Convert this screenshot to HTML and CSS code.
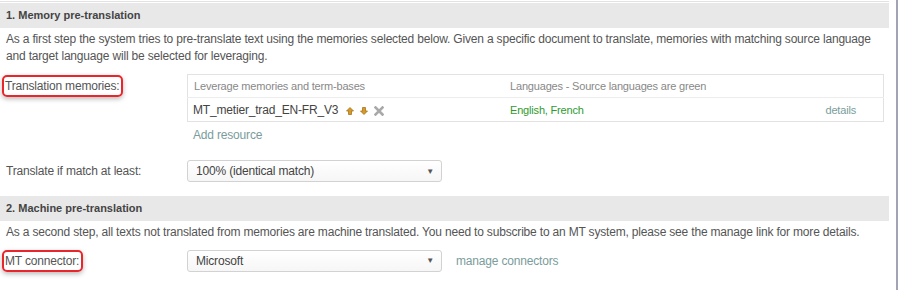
FILE: index.html
```html
<!DOCTYPE html>
<html>
<head>
<meta charset="utf-8">
<link rel="stylesheet" href="styles.css">
</head>
<body>
<div class="frame">
  <div class="page">
    <div class="section-head">1. Memory pre-translation</div>
    <p class="desc">As a first step the system tries to pre-translate text using the memories selected below. Given a specific document to translate, memories with matching source language and target language will be selected for leveraging.</p>

    <div class="field field-top">
      <div class="label"><span class="hl">Translation memories:</span></div>
      <div class="control">
        <table class="tm">
          <thead>
            <tr><th class="c1">Leverage memories and term-bases</th><th class="c2">Languages - Source languages are green</th><th class="c3"></th></tr>
          </thead>
          <tbody>
            <tr>
              <td class="c1"><span class="tm-name">MT_metier_trad_EN-FR_V3</span>
                <span class="icons">
                  <svg class="ico" width="8" height="8" viewBox="0 0 8 8"><path d="M4 0.5 L7.5 4 L5.5 4 L5.5 7.5 L2.5 7.5 L2.5 4 L0.5 4 Z" fill="#d29a28" stroke="#a87316" stroke-width="0.8"/></svg>
                  <svg class="ico" width="8" height="8" viewBox="0 0 8 8"><path d="M4 7.5 L7.5 4 L5.5 4 L5.5 0.5 L2.5 0.5 L2.5 4 L0.5 4 Z" fill="#d29a28" stroke="#a87316" stroke-width="0.8"/></svg>
                  <svg class="ico" width="10" height="10" viewBox="0 0 10 10"><path d="M1.5 1.5 L8.5 8.5 M8.5 1.5 L1.5 8.5" stroke="#a9a9a9" stroke-width="2.6" stroke-linecap="square"/></svg>
                </span>
              </td>
              <td class="c2 green">English, French</td>
              <td class="c3"><span class="link">details</span></td>
            </tr>
          </tbody>
        </table>
        <div class="add"><span class="link">Add resource</span></div>
      </div>
    </div>

    <div class="field field-match">
      <div class="label plain">Translate if match at least:</div>
      <div class="control row">
        <div class="select"><span>100% (identical match)</span><span class="arrow">&#9660;</span></div>
      </div>
    </div>

    <div class="section-head">2. Machine pre-translation</div>
    <p class="desc">As a second step, all texts not translated from memories are machine translated. You need to subscribe to an MT system, please see the manage link for more details.</p>

    <div class="field field-mt">
      <div class="label"><span class="hl">MT connector:</span></div>
      <div class="control row">
        <div class="select"><span>Microsoft</span><span class="arrow">&#9660;</span></div>
        <span class="link manage">manage connectors</span>
      </div>
    </div>
  </div>
</div>
</body>
</html>
```

FILE: styles.css
```css
html, body {
  margin: 0;
  padding: 0;
  background: #fff;
}
body {
  font-family: "Liberation Sans", Arial, sans-serif;
  font-size: 12px;
  letter-spacing: -0.18px;
  color: #555;
}
.frame {
  width: 896px;
  height: 290px;
  border-right: 2px solid #a3a3b6;
  box-sizing: content-box;
  overflow: hidden;
}
.page {
  width: 889px;
  border-top: 1px solid #e2e2e2;
  margin-top: 1px;
  padding-top: 1px;
}
.section-head {
  height: 25px;
  line-height: 24px;
  background: #e8e8e8;
  font-weight: bold;
  font-size: 11px;
  letter-spacing: 0;
  color: #444;
  padding-left: 6px;
}
.desc {
  margin: 0;
  padding: 3px 6px 0 6px;
  line-height: 17px;
  color: #555;
}
.field {
  display: grid;
  grid-template-columns: 187px 1fr;
}
.field-top { margin-top: 9px; }
.field-match { margin-top: 18px; align-items: center; margin-bottom: 14px; }
.field-mt { margin-top: 8px; align-items: center; }
.label.plain { padding-left: 6px; line-height: 14px; }
.hl {
  display: inline-block;
  margin-left: 2px;
  margin-top: 1px;
  padding: 2px 2px 2px 1px;
  line-height: 14px;
  border: 2px solid #e8262b;
  border-radius: 5px;
  box-shadow: 0 2px 5px rgba(0,0,0,0.28);
  color: #555;
}
.control.row {
  display: flex;
  align-items: center;
  gap: 14px;
}
.tm {
  width: 697px;
  border-collapse: collapse;
  border: 1px solid #e2e2e2;
}
.tm th {
  font-weight: normal;
  font-size: 11px;
  color: #888;
  text-align: left;
  height: 22px;
  padding: 0 6px;
  border-bottom: 1px solid #ececec;
}
.tm td {
  height: 23px;
  padding: 0 5px;
  color: #444;
}
.tm .c1 { width: 310px; }
.tm th.c2, .tm td.c2 { padding-left: 0; font-size: 11px; }
.tm .c3 { text-align: right; padding-right: 27px; font-size: 11px; }
.tm td.green { color: #2f9a2f; }
.tm-name { color: #444; }
.icons {
  display: inline-flex;
  align-items: center;
  gap: 6px;
  margin-left: 5px;
  vertical-align: -1px;
}
.link { color: #7a9c9c; }
.add {
  margin-top: 6px;
  padding-left: 6px;
  line-height: 14px;
}
.select {
  width: 255px;
  height: 22px;
  box-sizing: border-box;
  border: 1px solid #d2d2d2;
  border-radius: 3px;
  background: linear-gradient(#ffffff, #f6f6f6);
  display: flex;
  align-items: center;
  justify-content: space-between;
  padding: 0 7px 0 8px;
  color: #444;
}
.arrow {
  font-size: 8px;
  color: #555;
}
.manage { line-height: 14px; }
```
